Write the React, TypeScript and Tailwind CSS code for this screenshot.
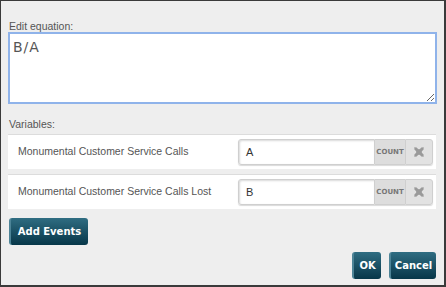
import React from 'react';

const variables = [
    { name: 'Monumental Customer Service Calls', value: 'A' },
    { name: 'Monumental Customer Service Calls Lost', value: 'B' },
];

const XIcon = () => (
    <svg width="12" height="12" viewBox="0 0 12 12">
        <path d="M1 1 L6 3.5 L11 1 L8.5 6 L11 11 L6 8.5 L1 11 L3.5 6 Z" fill="#9a9a9a" />
        <path d="M2 2 L10 10 M10 2 L2 10" stroke="#9a9a9a" strokeWidth="2.8" />
    </svg>
);

const btn =
    'h-[27px] rounded-[3px] bg-gradient-to-b from-[#2f6d82] to-[#073749] border-l-2 border-[#4d8497] text-white font-bold text-[10px] font-["DejaVu_Sans",sans-serif]';

const App: React.FC = () => {
    return (
        <div className="w-[446px] h-[287px] bg-[#eeeeee] border-l border-t border-r-2 border-b-2 border-[#3a3a3a] flex flex-col px-[7px] font-['Liberation_Sans',sans-serif] text-[10.5px] text-[#555]">
            <div className="mt-[19px] ml-[1px] h-[12px] leading-[12px]">Edit equation:</div>
            <textarea
                className="w-[429px] h-[72px] border-2 border-[#8fb3ea] bg-white px-[3px] py-[3px] text-[14px] text-[#555] font-['DejaVu_Sans',sans-serif] outline-none resize-y tracking-[1px]"
                defaultValue="B/A"
            />
            <div className="mt-[14px] ml-[1px] h-[13px] leading-[13px]">Variables:</div>
            <div className="mt-[3px] flex flex-col gap-[5px] w-[428px]">
                {variables.map((v) => (
                    <div key={v.value} className="h-[35px] bg-white border-t border-[#dcdcdc] flex items-center pl-[10px] pr-[3px]">
                        <span className="flex-1">{v.name}</span>
                        <div className="flex h-[26px] rounded-[3px] shadow-[0_1px_1px_rgba(0,0,0,0.15)]">
                            <div className="w-[137px] bg-white border border-[#cfcfcf] rounded-l-[3px] shadow-[inset_1px_1px_2px_rgba(0,0,0,0.15)] pl-[7px] flex items-center text-[11px] text-[#333]">
                                {v.value}
                            </div>
                            <div className="w-[30px] bg-[#dddddd] border-y border-[#cfcfcf] flex items-center justify-center text-[7px] font-bold text-[#777] font-['DejaVu_Sans',sans-serif]">
                                COUNT
                            </div>
                            <div className="w-[28px] bg-[#e2e2e2] border border-[#cfcfcf] rounded-r-[3px] flex items-center justify-center">
                                <XIcon />
                            </div>
                        </div>
                    </div>
                ))}
            </div>
            <div className="mt-[9px] ml-[1px]">
                <button className={`${btn} w-[79px]`}>Add Events</button>
            </div>
            <div className="mt-[7px] flex justify-end gap-[8px] pr-[1px]">
                <button className={`${btn} w-[29px]`}>OK</button>
                <button className={`${btn} w-[47px]`}>Cancel</button>
            </div>
        </div>
    );
};

export default App;
